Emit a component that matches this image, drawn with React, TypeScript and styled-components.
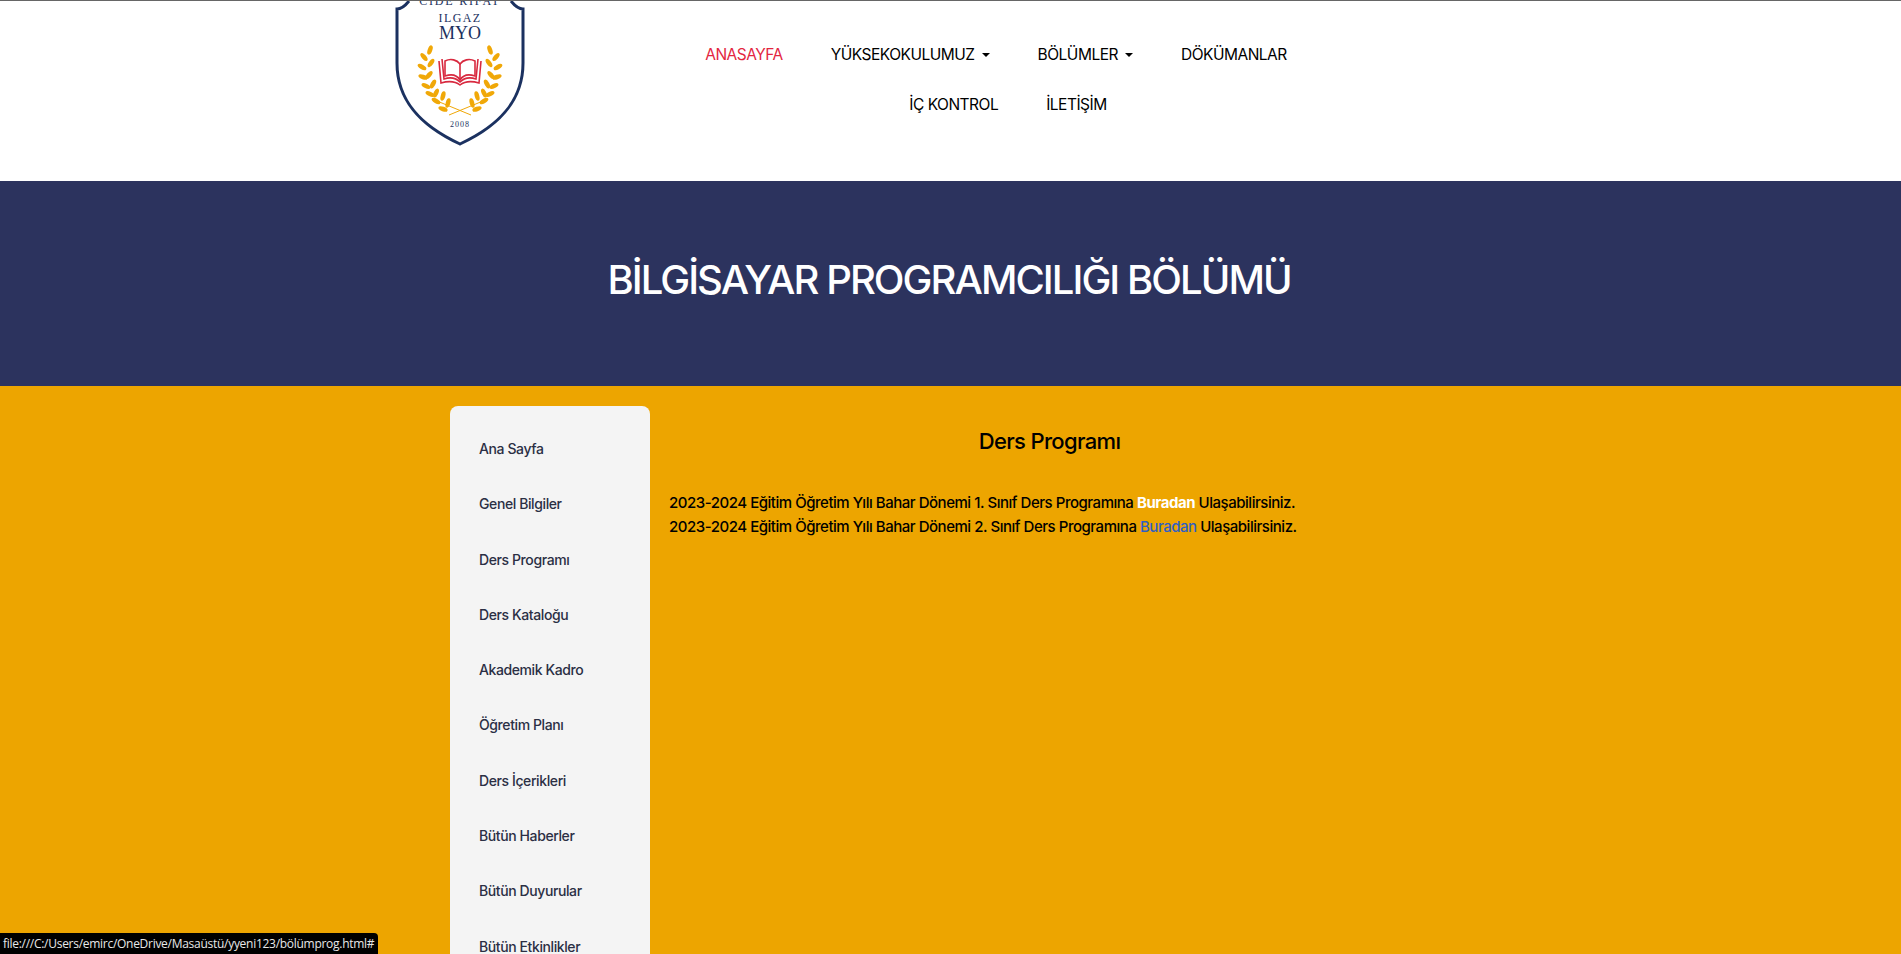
import styled, { createGlobalStyle } from 'styled-components'

const sideLinks = [
    'Ana Sayfa',
    'Genel Bilgiler',
    'Ders Programı',
    'Ders Kataloğu',
    'Akademik Kadro',
    'Öğretim Planı',
    'Ders İçerikleri',
    'Bütün Haberler',
    'Bütün Duyurular',
    'Bütün Etkinlikler',
]

// x, y, angle for the left branch of the laurel, the right one is mirrored
const leaves = [
    [35, 49, 20], [29, 56, -40], [36, 62, 35], [27, 66, -60], [34, 74, 40], [28, 76, -70],
    [38, 83, 30], [31, 85, -65], [41, 92, 25], [35, 93, -65], [48, 95, 15], [41, 100, -60],
    [53, 102, 15], [48, 108, -70],
]

const GlobalStyle = createGlobalStyle`
    html, body {
        margin: 0;
        height: 100%;
        overflow: hidden;
    }
    body {
        font-family: Inter, "Liberation Sans", sans-serif;
        background-color: #eda500;
    }
`

const Header = styled.header`
    height: 180px;
    border-top: 1px solid #666;
    background-color: #fff;
    display: flex;
    align-items: flex-start;
    padding-left: 395px;
`

const LogoSvg = styled.svg`
    display: block;
    flex-shrink: 0;
    width: 130px;
    height: 145px;
`

const Nav = styled.nav`
    width: 640px;
    margin-left: 151px;
    padding-top: 29px;
    display: flex;
    flex-wrap: wrap;
    justify-content: center;
`

const NavLink = styled.a<{ $active?: boolean; $indent?: boolean }>`
    height: 50px;
    line-height: 50px;
    padding: 0 24px;
    margin-left: ${p => (p.$indent ? '24px' : '0')};
    font-size: 15.5px;
    font-weight: 400;
    letter-spacing: -0.5px;
    white-space: nowrap;
    color: ${p => (p.$active ? '#e3263f' : '#000')};
`

const Caret = styled.span`
    display: inline-block;
    margin-left: 7px;
    vertical-align: 3px;
    border-top: 4px solid #000;
    border-left: 4px solid transparent;
    border-right: 4px solid transparent;
`

const Banner = styled.section`
    height: 205px;
    box-sizing: border-box;
    padding-bottom: 9px;
    padding-right: 3px;
    background-color: #2c335e;
    display: flex;
    align-items: center;
    justify-content: center;
`

const BannerTitle = styled.h1`
    margin: 0;
    font-size: 40px;
    font-weight: 500;
    letter-spacing: -1.95px;
    color: #fff;
`

const Body = styled.div`
    width: 1000px;
    margin: 20px 0 0 450px;
    display: flex;
    align-items: flex-start;
`

const SideNav = styled.aside`
    width: 200px;
    flex-shrink: 0;
    padding: 15px 0 20px 29px;
    box-sizing: border-box;
    background-color: #f4f4f4;
    border-radius: 8px;
    display: flex;
    flex-direction: column;
`

const SideLink = styled.a`
    height: 55.3px;
    line-height: 55.3px;
    font-size: 14px;
    font-weight: 500;
    letter-spacing: -0.4px;
    color: #2b2f44;
`

const Main = styled.main`
    flex: 1;
    padding: 0 20px 0 19px;
`

const MainTitle = styled.h2`
    margin: 20px 0 35px;
    text-align: center;
    font-size: 22px;
    line-height: 30px;
    font-weight: 500;
    letter-spacing: -0.65px;
    color: #000;
`

const Line = styled.p`
    margin: 0;
    font-size: 15px;
    line-height: 24px;
    font-weight: 500;
    letter-spacing: -0.47px;
    color: #000;
`

const Hot = styled.a`
    font-weight: 700;
    color: #fff;
`

const Plain = styled.a`
    color: #2f5fc4;
`

const StatusTip = styled.div`
    position: fixed;
    left: 0;
    bottom: 0;
    width: 378px;
    height: 21px;
    box-sizing: border-box;
    padding-left: 3px;
    background-color: #000;
    border-top-right-radius: 4px;
    color: #e8e8e8;
    font-family: "Open Sans", sans-serif;
    font-size: 12px;
    letter-spacing: -0.28px;
    line-height: 21px;
    white-space: nowrap;
`

const Logo = () => (
    <LogoSvg viewBox="0 0 130 145">
        <path
            d="M14 0 C10 5 6 8 2 8 L2 62 C2 100 26 125 65 143 C104 125 128 100 128 62 L128 8 C124 8 120 5 116 0"
            fill="#fff"
            stroke="#1b3160"
            strokeWidth="3"
        />
        <g fontFamily="Liberation Serif, serif" fill="#1b3160" textAnchor="middle">
            <text x="65" y="4" fontSize="12" letterSpacing="1.8">CIDE RIFAT</text>
            <text x="65" y="21" fontSize="12" letterSpacing="1.4">ILGAZ</text>
            <text x="65" y="38" fontSize="18">MYO</text>
            <text x="65" y="126" fontSize="8" letterSpacing="1">2008</text>
        </g>
        <g fill="#fff" stroke="#d8293f" strokeWidth="1.6">
            <path d="M44 60 L46 82 C53 80 60 80 65 84 C70 80 77 80 84 82 L86 60" />
            <path d="M47 58 L49 78 C55 76 61 77 65 81 C69 77 75 76 81 78 L83 58" />
            <path d="M50 60 C56 57 62 59 65 63 C68 59 74 57 80 60 L80 75 C74 73 68 74 65 79 C62 74 56 73 50 75 Z" />
            <path d="M65 63 L65 79" />
        </g>
        <g fill="#f0a808">
            {leaves.map(([x, y, a], k) => (
                <ellipse key={k} cx={x} cy={y} rx="2.3" ry="4.8" transform={`rotate(${a} ${x} ${y})`} />
            ))}
            {leaves.map(([x, y, a], k) => (
                <ellipse key={k} cx={130 - x} cy={y} rx="2.3" ry="4.8" transform={`rotate(${-a} ${130 - x} ${y})`} />
            ))}
        </g>
        <path d="M42 100 L76 114 M88 100 L54 114" stroke="#f0a808" strokeWidth="1" fill="none" />
    </LogoSvg>
)

export default function App() {
    return (
        <>
            <GlobalStyle />
            <Header>
                <Logo />
                <Nav>
                    <NavLink $active>ANASAYFA</NavLink>
                    <NavLink>YÜKSEKOKULUMUZ<Caret /></NavLink>
                    <NavLink>BÖLÜMLER<Caret /></NavLink>
                    <NavLink>DÖKÜMANLAR</NavLink>
                    <NavLink $indent>İÇ KONTROL</NavLink>
                    <NavLink>İLETİŞİM</NavLink>
                </Nav>
            </Header>
            <Banner>
                <BannerTitle>BİLGİSAYAR PROGRAMCILIĞI BÖLÜMÜ</BannerTitle>
            </Banner>
            <Body>
                <SideNav>
                    {sideLinks.map(l => (
                        <SideLink key={l}>{l}</SideLink>
                    ))}
                </SideNav>
                <Main>
                    <MainTitle>Ders Programı</MainTitle>
                    <Line>2023-2024 Eğitim Öğretim Yılı Bahar Dönemi 1. Sınıf Ders Programına <Hot>Buradan</Hot> Ulaşabilirsiniz.</Line>
                    <Line>2023-2024 Eğitim Öğretim Yılı Bahar Dönemi 2. Sınıf Ders Programına <Plain>Buradan</Plain> Ulaşabilirsiniz.</Line>
                </Main>
            </Body>
            <StatusTip>file:///C:/Users/emirc/OneDrive/Masaüstü/yyeni123/bölümprog.html#</StatusTip>
        </>
    )
}
